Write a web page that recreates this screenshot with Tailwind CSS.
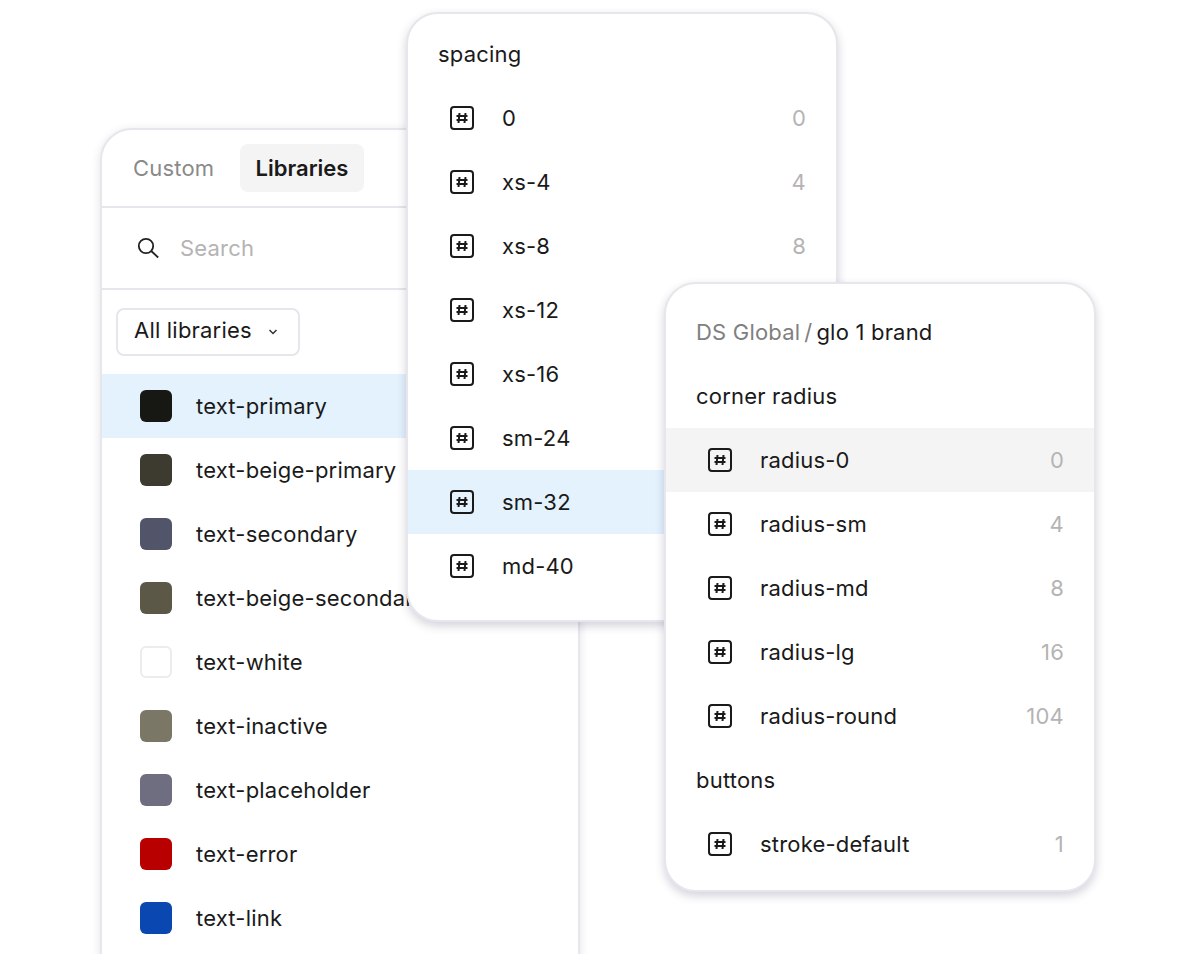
<!DOCTYPE html>
<html>
<head>
<meta charset="utf-8">
<script src="https://cdn.jsdelivr.net/npm/@tailwindcss/browser@4"></script>
</head>
<body class="bg-white">
<div class="relative w-[1196px] h-[954px] overflow-hidden bg-white font-['Inter',sans-serif] text-[22px] leading-[32px] tracking-[0.2px] text-[#1a1a1a]">

  <!-- Libraries panel -->
  <section class="absolute left-[100px] top-[128px] w-[480px] h-[900px] rounded-[32px] border-2 border-[#e6e6ec] bg-white shadow-[0_2px_10px_rgba(50,50,90,0.14)] overflow-hidden">
    <div class="h-[78px] flex items-center pl-[31px] border-b-2 border-[#e6e6ec]">
      <span class="w-[107px] text-[#8a8a8a]">Custom</span>
      <span class="w-[124px] h-[48px] flex items-center justify-center rounded-[8px] bg-[#f4f4f4] font-semibold tracking-normal text-[#1a1a1a]">Libraries</span>
    </div>
    <div class="h-[82px] flex items-center pl-[34px] gap-[20px] border-b-2 border-[#e6e6ec]">
      <svg class="w-[24px] h-[24px]" viewBox="0 0 24 24" fill="none" stroke="#222" stroke-width="1.8"><circle cx="10" cy="10" r="7.2"/><path d="M15.2 15l7 6.5"/></svg>
      <span class="text-[#b4b4b4]">Search</span>
    </div>
    <div class="h-[84px] flex items-center pl-[14px]">
      <div class="w-[184px] h-[48px] rounded-[8px] border-2 border-[#e6e6ec] flex items-center pl-[16px] gap-[16px]">
        <span class="pb-[4px]">All libraries</span>
        <svg class="w-[10px] h-[8px]" viewBox="0 0 10 8" fill="none" stroke="#333" stroke-width="1.5"><path d="M1.5 2l3.5 3.5L8.5 2"/></svg>
      </div>
    </div>
    <ul>
      <li class="h-[64px] flex items-center pl-[38px] gap-[24px] bg-[#e3f2fd]"><span class="w-[32px] h-[32px] rounded-[6px] bg-[#171714]"></span><span>text-primary</span></li>
      <li class="h-[64px] flex items-center pl-[38px] gap-[24px]"><span class="w-[32px] h-[32px] rounded-[6px] bg-[#3d3a30]"></span><span>text-beige-primary</span></li>
      <li class="h-[64px] flex items-center pl-[38px] gap-[24px]"><span class="w-[32px] h-[32px] rounded-[6px] bg-[#52546a]"></span><span>text-secondary</span></li>
      <li class="h-[64px] flex items-center pl-[38px] gap-[24px]"><span class="w-[32px] h-[32px] rounded-[6px] bg-[#5b5848]"></span><span>text-beige-secondary</span></li>
      <li class="h-[64px] flex items-center pl-[38px] gap-[24px]"><span class="w-[32px] h-[32px] rounded-[6px] bg-white border-2 border-[#ececec]"></span><span>text-white</span></li>
      <li class="h-[64px] flex items-center pl-[38px] gap-[24px]"><span class="w-[32px] h-[32px] rounded-[6px] bg-[#7b7767]"></span><span>text-inactive</span></li>
      <li class="h-[64px] flex items-center pl-[38px] gap-[24px]"><span class="w-[32px] h-[32px] rounded-[6px] bg-[#6e6e80]"></span><span>text-placeholder</span></li>
      <li class="h-[64px] flex items-center pl-[38px] gap-[24px]"><span class="w-[32px] h-[32px] rounded-[6px] bg-[#b80000]"></span><span>text-error</span></li>
      <li class="h-[64px] flex items-center pl-[38px] gap-[24px]"><span class="w-[32px] h-[32px] rounded-[6px] bg-[#0a47b0]"></span><span>text-link</span></li>
    </ul>
  </section>

  <!-- Spacing panel -->
  <section class="absolute left-[406px] top-[12px] w-[432px] h-[610px] rounded-[32px] border-2 border-[#e6e6ec] bg-white shadow-[0_4px_10px_rgba(50,50,90,0.22)] overflow-hidden">
    <div class="h-[72px] flex items-center pl-[30px] pt-[8px]">spacing</div>
    <ul>
      <li class="h-[64px] flex items-center pl-[42px] pr-[30px]"><svg class="w-[24px] h-[24px] mr-[28px]" viewBox="0 0 24 24" fill="none" stroke="#1a1a1a"><rect x="1" y="1" width="22" height="22" rx="3" stroke-width="2"/><path d="M9.5 7l-1 10M15.5 7l-1 10M6.5 10h11M6.5 14h11" stroke-width="2"/></svg><span class="flex-1">0</span><span class="text-[#b4b4b4]">0</span></li>
      <li class="h-[64px] flex items-center pl-[42px] pr-[30px]"><svg class="w-[24px] h-[24px] mr-[28px]" viewBox="0 0 24 24" fill="none" stroke="#1a1a1a"><rect x="1" y="1" width="22" height="22" rx="3" stroke-width="2"/><path d="M9.5 7l-1 10M15.5 7l-1 10M6.5 10h11M6.5 14h11" stroke-width="2"/></svg><span class="flex-1">xs-4</span><span class="text-[#b4b4b4]">4</span></li>
      <li class="h-[64px] flex items-center pl-[42px] pr-[30px]"><svg class="w-[24px] h-[24px] mr-[28px]" viewBox="0 0 24 24" fill="none" stroke="#1a1a1a"><rect x="1" y="1" width="22" height="22" rx="3" stroke-width="2"/><path d="M9.5 7l-1 10M15.5 7l-1 10M6.5 10h11M6.5 14h11" stroke-width="2"/></svg><span class="flex-1">xs-8</span><span class="text-[#b4b4b4]">8</span></li>
      <li class="h-[64px] flex items-center pl-[42px] pr-[30px]"><svg class="w-[24px] h-[24px] mr-[28px]" viewBox="0 0 24 24" fill="none" stroke="#1a1a1a"><rect x="1" y="1" width="22" height="22" rx="3" stroke-width="2"/><path d="M9.5 7l-1 10M15.5 7l-1 10M6.5 10h11M6.5 14h11" stroke-width="2"/></svg><span class="flex-1">xs-12</span></li>
      <li class="h-[64px] flex items-center pl-[42px] pr-[30px]"><svg class="w-[24px] h-[24px] mr-[28px]" viewBox="0 0 24 24" fill="none" stroke="#1a1a1a"><rect x="1" y="1" width="22" height="22" rx="3" stroke-width="2"/><path d="M9.5 7l-1 10M15.5 7l-1 10M6.5 10h11M6.5 14h11" stroke-width="2"/></svg><span class="flex-1">xs-16</span></li>
      <li class="h-[64px] flex items-center pl-[42px] pr-[30px]"><svg class="w-[24px] h-[24px] mr-[28px]" viewBox="0 0 24 24" fill="none" stroke="#1a1a1a"><rect x="1" y="1" width="22" height="22" rx="3" stroke-width="2"/><path d="M9.5 7l-1 10M15.5 7l-1 10M6.5 10h11M6.5 14h11" stroke-width="2"/></svg><span class="flex-1">sm-24</span></li>
      <li class="h-[64px] flex items-center pl-[42px] pr-[30px] bg-[#e3f2fd]"><svg class="w-[24px] h-[24px] mr-[28px]" viewBox="0 0 24 24" fill="none" stroke="#1a1a1a"><rect x="1" y="1" width="22" height="22" rx="3" stroke-width="2"/><path d="M9.5 7l-1 10M15.5 7l-1 10M6.5 10h11M6.5 14h11" stroke-width="2"/></svg><span class="flex-1">sm-32</span></li>
      <li class="h-[64px] flex items-center pl-[42px] pr-[30px]"><svg class="w-[24px] h-[24px] mr-[28px]" viewBox="0 0 24 24" fill="none" stroke="#1a1a1a"><rect x="1" y="1" width="22" height="22" rx="3" stroke-width="2"/><path d="M9.5 7l-1 10M15.5 7l-1 10M6.5 10h11M6.5 14h11" stroke-width="2"/></svg><span class="flex-1">md-40</span></li>
    </ul>
  </section>

  <!-- Radius panel -->
  <section class="absolute left-[664px] top-[282px] w-[432px] h-[610px] rounded-[32px] border-2 border-[#e6e6ec] bg-white shadow-[0_4px_10px_rgba(50,50,90,0.22)] overflow-hidden">
    <div class="h-[80px] flex items-center pl-[30px] pt-[16px] gap-[4px]"><span class="text-[#808080]">DS Global</span><span class="text-[#808080]">/</span><span>glo 1 brand</span></div>
    <div class="h-[64px] flex items-center pl-[30px]">corner radius</div>
    <ul>
      <li class="h-[64px] flex items-center pl-[42px] pr-[30px] bg-[#f4f4f4]"><svg class="w-[24px] h-[24px] mr-[28px]" viewBox="0 0 24 24" fill="none" stroke="#1a1a1a"><rect x="1" y="1" width="22" height="22" rx="3" stroke-width="2"/><path d="M9.5 7l-1 10M15.5 7l-1 10M6.5 10h11M6.5 14h11" stroke-width="2"/></svg><span class="flex-1">radius-0</span><span class="text-[#b4b4b4]">0</span></li>
      <li class="h-[64px] flex items-center pl-[42px] pr-[30px]"><svg class="w-[24px] h-[24px] mr-[28px]" viewBox="0 0 24 24" fill="none" stroke="#1a1a1a"><rect x="1" y="1" width="22" height="22" rx="3" stroke-width="2"/><path d="M9.5 7l-1 10M15.5 7l-1 10M6.5 10h11M6.5 14h11" stroke-width="2"/></svg><span class="flex-1">radius-sm</span><span class="text-[#b4b4b4]">4</span></li>
      <li class="h-[64px] flex items-center pl-[42px] pr-[30px]"><svg class="w-[24px] h-[24px] mr-[28px]" viewBox="0 0 24 24" fill="none" stroke="#1a1a1a"><rect x="1" y="1" width="22" height="22" rx="3" stroke-width="2"/><path d="M9.5 7l-1 10M15.5 7l-1 10M6.5 10h11M6.5 14h11" stroke-width="2"/></svg><span class="flex-1">radius-md</span><span class="text-[#b4b4b4]">8</span></li>
      <li class="h-[64px] flex items-center pl-[42px] pr-[30px]"><svg class="w-[24px] h-[24px] mr-[28px]" viewBox="0 0 24 24" fill="none" stroke="#1a1a1a"><rect x="1" y="1" width="22" height="22" rx="3" stroke-width="2"/><path d="M9.5 7l-1 10M15.5 7l-1 10M6.5 10h11M6.5 14h11" stroke-width="2"/></svg><span class="flex-1">radius-lg</span><span class="text-[#b4b4b4]">16</span></li>
      <li class="h-[64px] flex items-center pl-[42px] pr-[30px]"><svg class="w-[24px] h-[24px] mr-[28px]" viewBox="0 0 24 24" fill="none" stroke="#1a1a1a"><rect x="1" y="1" width="22" height="22" rx="3" stroke-width="2"/><path d="M9.5 7l-1 10M15.5 7l-1 10M6.5 10h11M6.5 14h11" stroke-width="2"/></svg><span class="flex-1">radius-round</span><span class="text-[#b4b4b4]">104</span></li>
    </ul>
    <div class="h-[64px] flex items-center pl-[30px]">buttons</div>
    <ul>
      <li class="h-[64px] flex items-center pl-[42px] pr-[30px]"><svg class="w-[24px] h-[24px] mr-[28px]" viewBox="0 0 24 24" fill="none" stroke="#1a1a1a"><rect x="1" y="1" width="22" height="22" rx="3" stroke-width="2"/><path d="M9.5 7l-1 10M15.5 7l-1 10M6.5 10h11M6.5 14h11" stroke-width="2"/></svg><span class="flex-1">stroke-default</span><span class="text-[#b4b4b4]">1</span></li>
    </ul>
  </section>
</div>
</body>
</html>
